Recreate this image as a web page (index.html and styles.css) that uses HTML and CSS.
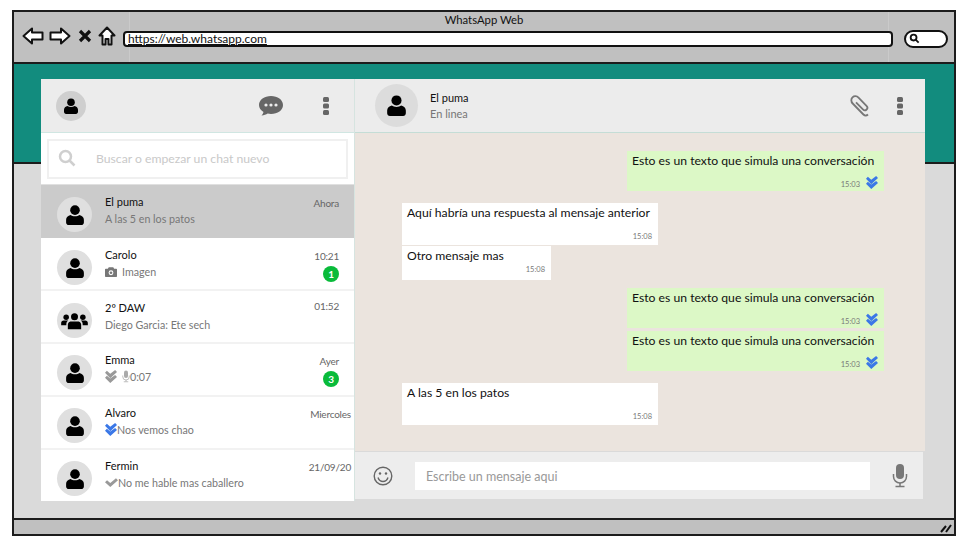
FILE: index.html
```html
<!DOCTYPE html>
<html lang="es">
<head>
  <meta charset="UTF-8">
  <title>WhatsApp Web</title>
  <link rel="stylesheet" href="styles.css">
</head>
<body>

  <svg class="sprites" width="0" height="0">
    <symbol id="i-person" viewBox="0 0 24 27">
      <circle cx="12" cy="7" r="6.500"/>
      <path d="M6 13.500c-3.500.8-6 3-6 6.500v3.500c0 2 1.500 3.500 3.500 3.500h17c2 0 3.500-1.500 3.500-3.500V20c0-3.500-2.500-5.700-6-6.500-1.500 1.200-3.500 1.800-6 1.800s-4.500-.6-6-1.800z"/>
    </symbol>
    <symbol id="i-group" viewBox="0 0 32 24">
      <circle cx="16" cy="7" r="4.200"/>
      <path d="M11 12.500h10c2 .5 3 2 3 4v5.500H8v-5.500c0-2 1-3.500 3-4z"/>
      <circle cx="6" cy="7.500" r="3.300"/>
      <path d="M3 11.500h5.500c-1.500 1-2.300 2.500-2.300 4.500v1H0v-2.500c0-1.800 1.200-3 3-3z"/>
      <circle cx="26" cy="7.500" r="3.300"/>
      <path d="M29 11.500h-5.500c1.500 1 2.300 2.500 2.300 4.500v1H32v-2.500c0-1.800-1.200-3-3-3z"/>
    </symbol>
    <symbol id="i-check2" viewBox="0 0 16 16" preserveAspectRatio="none">
      <path d="M0 3.500L2.500 1 7 4.500 13.500 0 16 2.500 7 10z"/>
      <path d="M0 9.500L2.500 7 7 10.500 13.500 6 16 8.500 7 16z"/>
    </symbol>
    <symbol id="i-check" viewBox="0 0 16 12">
      <path d="M0 5l2.500-2.500L6.500 6 13.500 0 16 2.500 6.500 11z"/>
    </symbol>
    <symbol id="i-mic" viewBox="0 0 16 24">
      <rect x="4" y="0" width="8" height="15" rx="4"/>
      <path d="M1.500 10v2.500a6.500 6.500 0 0 0 13 0V10" fill="none" stroke="currentColor" stroke-width="1.500"/>
      <path d="M8 19v3M3.500 22.500h9" fill="none" stroke="currentColor" stroke-width="1.500"/>
    </symbol>
    <symbol id="i-kebab" viewBox="0 0 6 18">
      <rect width="6" height="5" rx="1.500"/>
      <rect y="6.500" width="6" height="5" rx="1.500"/>
      <rect y="13" width="6" height="5" rx="1.500"/>
    </symbol>
  </svg>

  <div class="window">
    <header class="toolbar">
      <div class="page-title">WhatsApp Web</div>
      <div class="nav">
        <svg class="nav-icon" viewBox="0 0 22 18"><path d="M1.500 9L10 1.500V5.500H20.500V12.500H10V16.500z"/></svg>
        <svg class="nav-icon" viewBox="0 0 22 18"><path d="M20.500 9L12 1.500V5.500H1.500V12.500H12V16.500z"/></svg>
        <svg class="nav-x" viewBox="0 0 14 14"><path d="M2 2l10 10M12 2L2 12"/></svg>
        <svg class="nav-icon home" viewBox="0 0 18 20"><path d="M9 1.500L1.500 9.500H4.500V18.500H7.500V13H10.500V18.500H13.500V9.500H16.500z"/></svg>
        <div class="address"><span class="address-text">https://web.whatsapp.com</span></div>
        <div class="web-search">
          <svg viewBox="0 0 12 12"><circle cx="5" cy="5" r="3.200"/><path d="M7.500 7.500l3 3"/></svg>
        </div>
      </div>
    </header>
    <div class="band"></div>
    <div class="content"></div>
    <footer class="statusbar">
      <svg class="grip" viewBox="0 0 12 10"><path d="M1 9l5-6M6 9l5-7"/></svg>
    </footer>

    <main class="app">
      <aside class="sidebar">
        <div class="side-head">
          <div class="avatar small"><svg class="person"><use href="#i-person"/></svg></div>
          <svg class="bubble-icon" viewBox="0 0 24 20">
            <path d="M12 0C5.400 0 0 3.800 0 9c0 3 1.700 5.300 4.500 6.900-.3 1.400-1 2.600-2 3.600 2.500 0 4.600-.8 6.200-1.900 1 .2 2.100.4 3.300.4 6.600 0 12-3.800 12-9S18.600 0 12 0z"/>
            <circle cx="7" cy="9" r="1.600" fill="#ececec"/><circle cx="12" cy="9" r="1.600" fill="#ececec"/><circle cx="17" cy="9" r="1.600" fill="#ececec"/>
          </svg>
          <svg class="kebab"><use href="#i-kebab"/></svg>
        </div>
        <div class="search-wrap">
          <div class="search">
            <svg class="search-icon" viewBox="0 0 18 18"><circle cx="7.500" cy="7.500" r="5.500"/><path d="M11.500 11.500l5 5"/></svg>
            <span>Buscar o empezar un chat nuevo</span>
          </div>
        </div>
        <ul class="chats">
          <li class="chat active">
            <div class="avatar"><svg class="person"><use href="#i-person"/></svg></div>
            <div class="chat-main">
              <div class="chat-name">El puma</div>
              <div class="chat-last">A las 5 en los patos</div>
            </div>
            <div class="chat-meta"><span class="chat-time">Ahora</span></div>
          </li>
          <li class="chat">
            <div class="avatar"><svg class="person"><use href="#i-person"/></svg></div>
            <div class="chat-main">
              <div class="chat-name">Carolo</div>
              <div class="chat-last">
                <svg class="camera" viewBox="0 0 16 13"><path d="M5 0h6l1.200 2H15a1 1 0 0 1 1 1v9a1 1 0 0 1-1 1H1a1 1 0 0 1-1-1V3a1 1 0 0 1 1-1h2.800z"/><circle cx="8" cy="7.500" r="3.200" fill="#fff"/><circle cx="8" cy="7.500" r="1.800"/></svg>
                <span class="gap-left">Imagen</span>
              </div>
            </div>
            <div class="chat-meta"><span class="chat-time">10:21</span><span class="badge">1</span></div>
          </li>
          <li class="chat">
            <div class="avatar"><svg class="group"><use href="#i-group"/></svg></div>
            <div class="chat-main">
              <div class="chat-name">2º DAW</div>
              <div class="chat-last">Diego Garcia: Ete sech</div>
            </div>
            <div class="chat-meta top"><span class="chat-time">01:52</span></div>
          </li>
          <li class="chat low">
            <div class="avatar"><svg class="person"><use href="#i-person"/></svg></div>
            <div class="chat-main">
              <div class="chat-name">Emma</div>
              <div class="chat-last">
                <svg class="tick grey"><use href="#i-check2"/></svg>
                <svg class="mini-mic"><use href="#i-mic"/></svg>
                <span>0:07</span>
              </div>
            </div>
            <div class="chat-meta"><span class="chat-time">Ayer</span><span class="badge">3</span></div>
          </li>
          <li class="chat low">
            <div class="avatar"><svg class="person"><use href="#i-person"/></svg></div>
            <div class="chat-main">
              <div class="chat-name">Alvaro</div>
              <div class="chat-last">
                <svg class="tick blue"><use href="#i-check2"/></svg>
                <span>Nos vemos chao</span>
              </div>
            </div>
            <div class="chat-meta wide"><span class="chat-time">Miercoles</span></div>
          </li>
          <li class="chat low last">
            <div class="avatar"><svg class="person"><use href="#i-person"/></svg></div>
            <div class="chat-main">
              <div class="chat-name">Fermin</div>
              <div class="chat-last">
                <svg class="tick-one"><use href="#i-check"/></svg>
                <span>No me hable mas caballero</span>
              </div>
            </div>
            <div class="chat-meta wide"><span class="chat-time">21/09/20</span></div>
          </li>
        </ul>
      </aside>

      <section class="pane">
        <div class="pane-head">
          <div class="avatar big"><svg class="person"><use href="#i-person"/></svg></div>
          <div class="pane-who">
            <div class="pane-name">El puma</div>
            <div class="pane-status">En linea</div>
          </div>
          <svg class="clip" viewBox="0 0 20 22"><path d="M18 19.500c-1.300 1.300-3.300 1.300-4.600 0L2.700 8.500C.9 6.700 .9 4 2.500 2.400s4.300-1.600 6 .2l8 8.200c1.100 1.100 1.100 2.700.1 3.700s-2.600 1-3.700-.1L6 7.300"/></svg>
          <svg class="kebab"><use href="#i-kebab"/></svg>
        </div>

        <div class="messages">
          <div class="msg out">
            <p>Esto es un texto que simula una conversación</p>
            <div class="msg-foot"><span class="msg-time">15:03</span><svg class="tick blue"><use href="#i-check2"/></svg></div>
          </div>
          <div class="msg in reply">
            <p>Aquí habría una respuesta al mensaje anterior</p>
            <div class="msg-foot"><span class="msg-time">15:08</span></div>
          </div>
          <div class="msg in short">
            <p>Otro mensaje mas</p>
            <div class="msg-foot"><span class="msg-time">15:08</span></div>
          </div>
          <div class="msg out second">
            <p>Esto es un texto que simula una conversación</p>
            <div class="msg-foot"><span class="msg-time">15:03</span><svg class="tick blue"><use href="#i-check2"/></svg></div>
          </div>
          <div class="msg out third">
            <p>Esto es un texto que simula una conversación</p>
            <div class="msg-foot"><span class="msg-time">15:03</span><svg class="tick blue"><use href="#i-check2"/></svg></div>
          </div>
          <div class="msg in fourth">
            <p>A las 5 en los patos</p>
            <div class="msg-foot"><span class="msg-time">15:08</span></div>
          </div>
        </div>

        <div class="composer">
          <svg class="emoji" viewBox="0 0 20 20"><circle cx="10" cy="10" r="8.800"/><circle class="dot" cx="7" cy="7.500" r="1.200"/><circle class="dot" cx="13" cy="7.500" r="1.200"/><path d="M5 11.500c.8 2.500 2.700 4 5 4s4.200-1.500 5-4"/></svg>
          <div class="composer-input">Escribe un mensaje aqui</div>
          <svg class="composer-mic"><use href="#i-mic"/></svg>
        </div>
      </section>
    </main>
  </div>

</body>
</html>
```

FILE: styles.css
```css
* {
  box-sizing: border-box;
}

body {
  margin: 0;
  background-color: #ffffff;
  font-family: "Lato", "Noto Sans", sans-serif;
  color: #111111;
}

.sprites {
  position: absolute;
}

/* browser frame */
.window {
  position: relative;
  display: flex;
  flex-direction: column;
  width: 944px;
  height: 526px;
  margin: 10px 0 0 12px;
  border: 2px solid #1c1c1c;
}

.toolbar {
  height: 50px;
  background-color: #c0c0c0;
  background-image: linear-gradient(#cacaca, #cacaca), linear-gradient(#cacaca, #cacaca);
  background-size: 1px 100%;
  background-position: 115px 0, 874px 0;
  background-repeat: no-repeat;
}

.page-title {
  font-size: 11.300px;
  line-height: 15px;
  text-align: center;
}

.nav {
  display: flex;
  align-items: center;
  height: 20px;
  margin-top: 2px;
  padding-left: 8px;
}

.nav-icon {
  width: 22px;
  height: 18px;
  margin: 0 5px 7px 0;
  fill: #ffffff;
  stroke: #111111;
  stroke-width: 2;
  stroke-linejoin: round;
}

.nav-x {
  width: 14px;
  height: 14px;
  margin: 0 6px 7px 2px;
  fill: none;
  stroke: #111111;
  stroke-width: 3.200;
}

.nav-icon.home {
  width: 18px;
  height: 20px;
  margin-right: 7px;
}

.address {
  width: 770px;
  height: 16px;
  background-color: #ffffff;
  border: 2px solid #111111;
  border-radius: 4px;
  padding-left: 3px;
  font-size: 12px;
  line-height: 12px;
}

.address-text {
  text-decoration: underline;
  white-space: nowrap;
}

.web-search {
  width: 44px;
  height: 18px;
  margin-left: 11px;
  background-color: #ffffff;
  border: 2px solid #111111;
  border-radius: 9px;
  padding: 1px 0 0 3px;
}

.web-search svg {
  display: block;
  width: 11px;
  height: 11px;
  fill: none;
  stroke: #111111;
  stroke-width: 2;
}

.band {
  height: 102px;
  background-color: #128c7e;
  border-top: 2px solid #1c1c1c;
  border-bottom: 2px solid #1c1c1c;
}

.content {
  flex: 1;
  background-color: #dadada;
}

.statusbar {
  position: relative;
  height: 16px;
  background-color: #c0c0c0;
  border-top: 2px solid #1c1c1c;
}

.grip {
  position: absolute;
  right: 2px;
  bottom: 1px;
  width: 12px;
  height: 10px;
  fill: none;
  stroke: #111111;
  stroke-width: 2;
}

/* whatsapp panel, sits on top of the frame */
.app {
  position: absolute;
  left: 27px;
  top: 67px;
  display: flex;
  width: 884px;
  height: 422px;
}

.sidebar {
  width: 314px;
  background-color: #ffffff;
  border-right: 1px solid #d6e4e0;
}

.side-head {
  display: flex;
  align-items: center;
  height: 54px;
  padding-left: 15px;
  background-color: #ececec;
  border-bottom: 1px solid #d0e6e2;
}

.avatar {
  display: flex;
  align-items: center;
  justify-content: center;
  flex: none;
  width: 35px;
  height: 35px;
  border-radius: 50%;
  background-color: #dfdfdf;
}

.avatar.small {
  width: 30px;
  height: 30px;
  background-color: #cfcfcf;
}

.avatar.big {
  width: 43px;
  height: 43px;
  background-color: #dcdcdc;
}

.person {
  width: 18px;
  height: 20px;
  fill: #000000;
}

.avatar.small .person {
  width: 14px;
  height: 16px;
}

.avatar.big .person {
  width: 19px;
  height: 21px;
}

.group {
  width: 27px;
  height: 20px;
  fill: #000000;
}

.bubble-icon {
  width: 24px;
  height: 20px;
  margin-left: 173px;
  fill: #666666;
}

.kebab {
  width: 6px;
  height: 18px;
  margin-left: 40px;
  fill: #666666;
}

.search-wrap {
  height: 52px;
  padding: 6px;
  border-bottom: 1px solid #e0e0e0;
}

.search {
  display: flex;
  align-items: center;
  height: 40px;
  border: 2px solid #f0f0f0;
  padding: 0 0 2px 9px;
  font-size: 12.200px;
  color: #c9c9c9;
}

.search-icon {
  width: 18px;
  height: 18px;
  margin-right: 20px;
  fill: none;
  stroke: #cfcfcf;
  stroke-width: 2.500;
}

.chats {
  list-style: none;
  margin: 0;
  padding: 0;
}

.chat {
  display: flex;
  align-items: flex-start;
  height: 53px;
  padding: 12px 0 0 16px;
  border-bottom: 2px solid #f2f2f2;
}

.chat.low {
  padding-top: 11px;
}

.chat.active {
  background-color: #cbcbcb;
  border-bottom: none;
}

.chat.last {
  height: 51px;
  border-bottom: none;
}

.chat-main {
  flex: 1;
  margin-top: -3px;
  padding-left: 13px;
}

.chat-name {
  font-size: 11px;
  line-height: 15px;
}

.chat-last {
  display: flex;
  align-items: center;
  height: 15px;
  margin-top: 2px;
  font-size: 10.700px;
  color: #777777;
}

.gap-left {
  margin-left: 5px;
}

.chat-meta {
  display: flex;
  flex-direction: column;
  align-items: flex-end;
  width: 60px;
  margin-top: -1px;
  padding-right: 15px;
  font-size: 10px;
  letter-spacing: -0.200px;
  line-height: 15px;
  color: #666666;
}

.chat-meta.top {
  margin-top: -4px;
}

.chat-meta.wide {
  padding-right: 3px;
}

.badge {
  width: 16px;
  height: 16px;
  margin-top: 2px;
  border-radius: 50%;
  background-color: #09bb3a;
  color: #ffffff;
  font-size: 10px;
  font-weight: 700;
  line-height: 16px;
  text-align: center;
}

.camera {
  width: 12px;
  height: 10px;
  fill: #777777;
}

.tick {
  width: 12px;
  height: 13px;
}

.tick.blue {
  fill: #3b78e7;
}

.tick.grey {
  fill: #999999;
}

.tick-one {
  width: 13px;
  height: 10px;
  fill: #999999;
}

.mini-mic {
  width: 8px;
  height: 13px;
  margin-left: 5px;
  fill: #aaaaaa;
  color: #aaaaaa;
}

/* conversation */
.pane {
  display: flex;
  flex-direction: column;
  flex: 1;
}

.pane-head {
  display: flex;
  align-items: center;
  height: 54px;
  padding-left: 20px;
  background-color: #ececec;
  border-bottom: 1px solid #c4ddd6;
}

.pane-who {
  flex: 1;
  padding-left: 12px;
}

.pane-name {
  font-size: 11px;
  line-height: 15px;
}

.pane-status {
  font-size: 11px;
  line-height: 15px;
  margin-top: 1px;
  color: #777777;
}

.clip {
  width: 20px;
  height: 22px;
  fill: none;
  stroke: #777777;
  stroke-width: 1.800;
}

.pane-head .kebab {
  margin: 0 22px 0 27px;
}

.messages {
  display: flex;
  flex-direction: column;
  flex: 1;
  align-items: flex-start;
  padding: 18px 41px 0 47px;
  background-color: #ebe4de;
}

.msg {
  width: 256px;
  padding: 2px 6px 0 5px;
  font-size: 12.200px;
}

.msg p {
  margin: 0;
  line-height: 15px;
  white-space: nowrap;
}

.msg.in {
  background-color: #ffffff;
  height: 42px;
}

.msg.out {
  align-self: flex-end;
  width: 257px;
  height: 40px;
  background-color: #dcf8c6;
}

.msg.reply {
  margin-top: 12px;
}

.msg.short {
  width: 149px;
  height: 34px;
  margin-top: 1px;
}

.msg.second {
  margin-top: 8px;
}

.msg.third {
  margin-top: 3px;
}

.msg.fourth {
  margin-top: 12px;
}

.msg-foot {
  display: flex;
  align-items: center;
  justify-content: flex-end;
  height: 14px;
  margin-top: 7px;
  gap: 6px;
}

.msg.short .msg-foot {
  margin-top: -3px;
}

.msg-time {
  margin-top: 4px;
  font-size: 7.500px;
  color: #777777;
}

.composer {
  display: flex;
  align-items: center;
  flex: none;
  width: 568px;
  height: 47px;
  margin: 1px 0 2px;
  padding-left: 18px;
  background-color: #ededed;
}

.emoji {
  width: 20px;
  height: 20px;
  fill: none;
  stroke: #666666;
  stroke-width: 1.400;
}

.emoji .dot {
  fill: #666666;
  stroke: none;
}

.composer-input {
  width: 455px;
  height: 28px;
  margin-left: 22px;
  padding-left: 11px;
  background-color: #ffffff;
  font-size: 12.500px;
  line-height: 30px;
  color: #999999;
}

.composer-mic {
  width: 16px;
  height: 24px;
  margin-left: 22px;
  fill: #777777;
  color: #777777;
}
```
